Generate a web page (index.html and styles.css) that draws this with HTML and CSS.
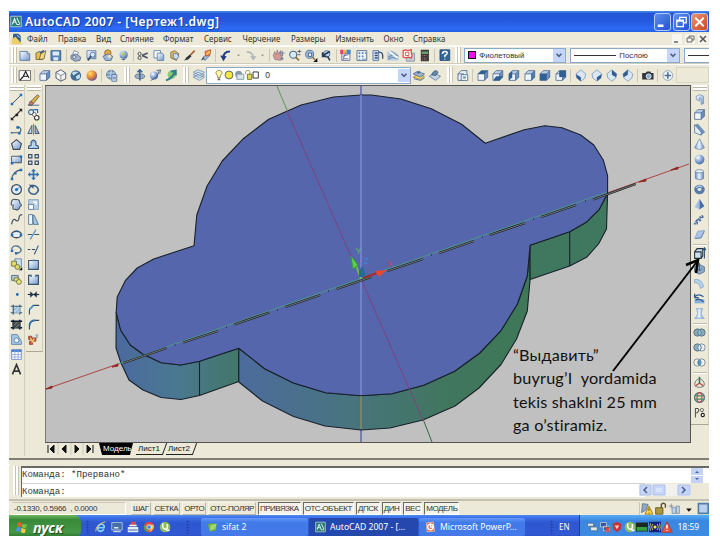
FILE: index.html
```
<!DOCTYPE html>
<html lang="ru">
<head>
<meta charset="utf-8">
<title>AutoCAD 2007 - [Чертеж1.dwg]</title>
<link rel="stylesheet" href="styles.css">
</head>
<body>
<svg class="defs" width="0" height="0">
<defs>
<linearGradient id="gb" x1="0" y1="0" x2="1" y2="1"><stop offset="0" stop-color="#fff"/><stop offset="1" stop-color="#7098cf"/></linearGradient>
<linearGradient id="gh"><stop stop-color="#6990ca"/><stop offset=".45" stop-color="#eef5ff"/><stop offset="1" stop-color="#6289c2"/></linearGradient>
<radialGradient id="gr" cx=".35" cy=".3" r=".8"><stop offset="0" stop-color="#fff"/><stop offset=".4" stop-color="#9bb8e4"/><stop offset="1" stop-color="#3d5f9c"/></radialGradient>
<radialGradient id="go" cx=".35" cy=".3" r=".8"><stop offset="0" stop-color="#ffdf69"/><stop offset=".5" stop-color="#e78b35"/><stop offset="1" stop-color="#5447aa"/></radialGradient>
<linearGradient id="wallA"><stop stop-color="#4b699f"/><stop offset=".5" stop-color="#4a7890"/><stop offset="1" stop-color="#427768"/></linearGradient>
<linearGradient id="wallB"><stop stop-color="#4c6b9c"/><stop offset=".38" stop-color="#48747f"/><stop offset=".7" stop-color="#41765f"/><stop offset="1" stop-color="#3e7856"/></linearGradient>
<symbol id="new" viewBox="0 0 16 16"><path d="M2 3h9l3 3v8H2z" fill="url(#gb)" stroke="#526f94"/><path d="M11 3v3h3" fill="#fff" stroke="#526f94"/></symbol>
<symbol id="open" viewBox="0 0 16 16"><path d="M2 5l4-2 4 2v8H2z" fill="#e6bb47" stroke="#685e42"/><path d="M6 13l2-7 6-4-2 10z" fill="#f7d979" stroke="#685e42"/><path d="M7 5l5-3" stroke="#35557c" stroke-width="2"/></symbol>
<symbol id="save" viewBox="0 0 16 16"><path d="M2 2h12v12H2z" fill="#5483be" stroke="#395779"/><path d="M4 3h8v5H4zM5 10h6v4H5z" fill="#dce9f6"/></symbol>
<symbol id="print" viewBox="0 0 16 16"><path d="M4 7l2-5 5 2-1 4" fill="#fff" stroke="#657da1"/><path d="M2 8l6-2 6 4-1 4-6 1-5-3z" fill="#a3b3ce" stroke="#526684"/><circle cx="6" cy="10" r="2" fill="#dce5f3" stroke="#526684"/></symbol>
<symbol id="preview" viewBox="0 0 16 16"><path d="M2 2h11v10H2z" fill="url(#gb)" stroke="#647fa6"/><circle cx="9" cy="7" r="3" fill="#d9edff" stroke="#4e6e97"/><path d="M7 9l-4 5" stroke="#354a66" stroke-width="2"/></symbol>
<symbol id="publish" viewBox="0 0 16 16"><circle cx="8" cy="5" r="4" fill="#e1a947" stroke="#826435"/><path d="M2 9l6-3 6 3-2 5H5z" fill="#9cb6dc" stroke="#546a8d"/><circle cx="10" cy="9" r="2" fill="#f6e6ab"/></symbol>
<symbol id="dwf" viewBox="0 0 16 16"><circle cx="9" cy="7" r="5" fill="url(#gr)"/><path d="M1 10q7 5 13 0l-5 4z" fill="#415f7f"/><path d="M6 4l5 1-3 5z" fill="#b4c75b"/></symbol>
<symbol id="cut" viewBox="0 0 16 16"><path d="M7 8l7-3M7 8l7 3" stroke="#475363" stroke-width="2"/><circle cx="4" cy="6" r="2" fill="none" stroke="#2e3a46"/><circle cx="4" cy="11" r="2" fill="none" stroke="#2e3a46"/></symbol>
<symbol id="copy" viewBox="0 0 16 16"><path d="M2 2h8v9H2z" fill="#fff" stroke="#577ba6"/><path d="M6 5h6l2 2v7H6z" fill="url(#gb)" stroke="#577ba6"/></symbol>
<symbol id="paste" viewBox="0 0 16 16"><path d="M3 4l5-2 5 4-3 8-7-3z" fill="#e3bd68" stroke="#7a6540"/><path d="M6 6l4-1 3 4-3 4-4-2z" fill="#c7dbf2" stroke="#5c7391"/></symbol>
<symbol id="brush" viewBox="0 0 16 16"><path d="M14 2L7 9" stroke="#a86237" stroke-width="2"/><path d="M8 7l2 2-4 4-5 1 3-4z" fill="#303541"/></symbol>
<symbol id="block" viewBox="0 0 16 16"><path d="M2 14l3-5 3 3z" fill="#335787"/><path d="M5 10l4-4 4 2-6 6z" fill="#a9bfd8" stroke="#55708f"/><path d="M7 3l7-2-1 6-5 2z" fill="#eb9449" stroke="#b9462f"/><path d="M9 7l4-4" stroke="#ffd964" stroke-width="1.500"/></symbol>
<symbol id="undo" viewBox="0 0 16 16"><path d="M13 3Q5 3 5 11" fill="none" stroke="#213d7e" stroke-width="2.5"/><path d="M1 8l8 1-4 6z" fill="#213d7e"/></symbol>
<symbol id="redo" viewBox="0 0 16 16"><path d="M3 4Q10 3 11 10" fill="none" stroke="#b3b6ba" stroke-width="2"/><path d="M7 9h8l-4 5z" fill="#b3b6ba"/></symbol>
<symbol id="caret" viewBox="0 0 8 16"><path d="M2 7h4L4 9z" fill="#8b8a83"/></symbol>
<symbol id="hand" viewBox="0 0 16 16"><path d="M3 13L1 8l2-5 2 4 1-6 2 5 2-4v6l3-1-3 7z" fill="#d29a93" stroke="#765b68" stroke-width=".6"/><path d="M12 2v6M9 5h6M12 10v4M10 12h4" stroke="#4b6ca0"/></symbol>
<symbol id="zoom" viewBox="0 0 16 16"><circle cx="6" cy="7" r="4.300" fill="#d6ebfa" stroke="#506c88" stroke-width="1.3"/><path d="M9 10l4 4" stroke="#8f7743" stroke-width="2.300"/><path d="M11 3h5M13.500 1v4M11 7h4" stroke="#3e536d"/></symbol>
<symbol id="zoomw" viewBox="0 0 16 16"><circle cx="6.500" cy="6.500" r="5" fill="#9bbddd" stroke="#466b94"/><path d="M5 5h4v4H5z" fill="#fff" stroke="#324e72"/><path d="M10 10l3 3" stroke="#8f7743" stroke-width="2"/><path d="M16 11v5h-5z" fill="#111"/></symbol>
<symbol id="zoomp" viewBox="0 0 16 16"><circle cx="9" cy="6" r="4" fill="#c6daed" stroke="#415e80"/><path d="M13 3L4 8M4 4v5h5M10 9l3 5" fill="none" stroke="#253954" stroke-width="2"/></symbol>
<symbol id="props" viewBox="0 0 16 16"><path d="M3 6h10v8H3z" fill="#f8faff" stroke="#596d8a"/><path d="M1 1h4v5H1z" fill="#e53e83"/><path d="M5 1h4v5H5z" fill="#e4c13b"/><path d="M9 1h5v5H9z" fill="#4b84c9"/><path d="M4 9l7-2M5 12h6M4 14l4-10" stroke="#675c91"/></symbol>
<symbol id="center" viewBox="0 0 16 16"><path d="M2 2h12v12H2z" fill="#eef6ff" stroke="#445f85"/><path d="M4 4h2v2H4zM8 4h2v2H8zM12 4h1v2h-1zM4 8h2v2H4zM8 8h2v2H8zM4 12h2v1H4zM8 12h5v1H8z" fill="#4a7db9"/></symbol>
<symbol id="palette" viewBox="0 0 16 16"><path d="M2 2h7v12H2z" fill="#dceafb" stroke="#456493"/><path d="M4 5h4M4 8h4M4 11h4M9 4q6-1 5 8" fill="none" stroke="#32527e" stroke-width="1.7"/></symbol>
<symbol id="sheet" viewBox="0 0 16 16"><path d="M1 3h9l5 5v6H1z" fill="#b4cce4"/><path d="M2 10l6-3 6 1M2 13l5-3 7 2" fill="none" stroke="#7292ae" stroke-width="1.500"/><path d="M4 3l10 8" stroke="#f4f9fc" stroke-width="2.500"/><path d="M5 2l10 7" stroke="#55738f" stroke-width=".8"/></symbol>
<symbol id="markup" viewBox="0 0 16 16"><path d="M5 5h10v10H5z" fill="#c4cad5" stroke="#8291a7"/><path d="M1 2l3-1 3 1 4-1v4l1 3-1 3-4-1-3 1-3-1V7z" fill="#fff" stroke="#e34645" stroke-width="1.500"/><path d="M4 4h4v4H4z" fill="none" stroke="#dd3d3d"/></symbol>
<symbol id="calc" viewBox="0 0 16 16"><path d="M3 1h10v14H3z" fill="#353c3b"/><path d="M4 3h8v3H4z" fill="#6e9c6d"/><path d="M5 8h6M5 11h6M5 13h6" stroke="#e66c6b" stroke-dasharray="1 1"/></symbol>
<symbol id="help" viewBox="0 0 16 16"><path d="M2 1h12v13H2z" fill="#346799" stroke="#254974"/><path d="M5 6q0-3 3-3 3 0 3 2 0 2-3 3v2M8 12v1" fill="none" stroke="#fff" stroke-width="1.7"/></symbol>
<symbol id="cube" viewBox="0 0 16 16"><path d="M2 6h8v8H2z" fill="#edf5ff"/><path d="M2 6l4-4h8l-4 4z" fill="#b7cdeb"/><path d="M10 6l4-4v8l-4 4z" fill="#688fc5"/><path d="M2 6h8v8H2zl4-4h8l-4 4M14 2v8l-4 4" fill="none" stroke="#455f88" stroke-width=".9"/></symbol>
<symbol id="hex" viewBox="0 0 16 16"><path d="M8 1l6 4v7l-6 3-6-4V4z" fill="#f4f5f6" stroke="#373f4b"/><path d="M2 4l6 4 6-3M8 8v7" fill="none" stroke="#65758d"/></symbol>
<symbol id="sphere" viewBox="0 0 16 16"><circle cx="8" cy="8" r="6" fill="url(#gr)"/></symbol>
<symbol id="world" viewBox="0 0 16 16"><circle cx="8" cy="8" r="6.500" fill="#456a91"/><path d="M3 5q4-3 8-1L5 8zM8 9l5-3v5l-4 2z" fill="#c5e0ef"/></symbol>
<symbol id="orange" viewBox="0 0 16 16"><circle cx="8" cy="8" r="6.500" fill="url(#go)"/></symbol>
<symbol id="visman" viewBox="0 0 16 16"><circle cx="7" cy="7" r="5.5" fill="#7799bd" stroke="#4b6e91"/><path d="M2 5h10M2 9h10M7 1v12" stroke="#d8e6f1"/><path d="M8 7h6v8H8z" fill="#d7e7fb" stroke="#496995"/><path d="M9 10h4M9 12h4" stroke="#496995"/></symbol>
<symbol id="textbox" viewBox="0 0 16 16"><path d="M1 2h14v12H1z" fill="#fff" stroke="#555"/><path d="M5 11l4-8 4 8M6 9h6M2 14l3-4" fill="none" stroke="#151515" stroke-width="1.3"/></symbol>
<symbol id="orbit1" viewBox="0 0 16 16"><ellipse cx="8" cy="9" rx="6" ry="3" fill="#98adc3" stroke="#5c728a"/><path d="M8 1v13M5 4l3-3 3 3" fill="none" stroke="#426895" stroke-width="2"/></symbol>
<symbol id="orbit2" viewBox="0 0 16 16"><circle cx="7" cy="8" r="5" fill="url(#gr)"/><path d="M3 14Q12 11 13 2M10 2l5-1-1 5" fill="none" stroke="#3d5572"/></symbol>
<symbol id="orbit3" viewBox="0 0 16 16"><circle cx="9" cy="7" r="5" fill="#8aca73"/><path d="M2 14Q10 12 13 3M8 3l6-1v6" fill="none" stroke="#2f7e8b" stroke-width="2.500"/></symbol>
<symbol id="layers" viewBox="0 0 16 16"><path d="M1 10l6-3 8 3-6 4zM1 7l6-3 8 3-6 4zM1 4l6-3 8 3-6 4z" fill="#d8e5f1" stroke="#7093b2"/></symbol>
<symbol id="layerc" viewBox="0 0 16 16"><path d="M1 10l5-3 9 2-5 4z" fill="#f5da5b" stroke="#958439"/><path d="M1 6l5-3 9 3-5 4z" fill="#9cb3ca" stroke="#526e8e"/><path d="M5 4l5-2-2 4" fill="#426890"/><path d="M2 12l8 2 5-3" fill="none" stroke="#466789"/></symbol>
<symbol id="layerp" viewBox="0 0 16 16"><path d="M1 9l6-4 8 4-6 5z" fill="#c1d2e6" stroke="#627b98"/><path d="M4 7q4-8 8-3l-3 4z" fill="#678cb7" stroke="#354f70"/></symbol>
<symbol id="named" viewBox="0 0 16 16"><path d="M2 6l4-4h7v4M2 6h7v8H2z" fill="#e9f2fc" stroke="#466183"/><path d="M6 7h8v7H6z" fill="#fff" stroke="#466183"/><path d="M8 9h4v3H8z" fill="#84a2c5"/></symbol>
<symbol id="iso" viewBox="0 0 16 16"><path d="M8 1l6 5-1 5-5 4-5-4-1-5z" fill="#d9e7f6" stroke="#6784a6" stroke-width=".8"/><path d="M2 6l6 4v5l-5-4z" fill="#2f5d91"/></symbol>
<symbol id="iso2" viewBox="0 0 16 16"><path d="M8 1l6 5-1 5-5 4-5-4-1-5z" fill="#d9e7f6" stroke="#6784a6" stroke-width=".8"/><path d="M8 1l6 5-1 4-5-3z" fill="#2f5d91"/></symbol>
<symbol id="camera" viewBox="0 0 16 16"><path d="M1 5h4l2-2h4l1 2h3v8H1z" fill="#303541"/><circle cx="9" cy="9" r="3" fill="#86afcb" stroke="#fff"/></symbol>
<symbol id="target" viewBox="0 0 16 16"><circle cx="8" cy="8" r="6" fill="#edf3fa" stroke="#8297ae"/><path d="M8 4v8M4 8h8" stroke="#527195" stroke-width="2"/></symbol>
<symbol id="line" viewBox="0 0 16 16"><path d="M3 13L13 3" stroke="#344a68" stroke-width="1.2"/><path d="M1 12h3v3H1zM12 1h3v3h-3z" fill="#2272c3"/></symbol>
<symbol id="xline" viewBox="0 0 16 16"><path d="M2 14L14 2" stroke="#222" stroke-width="1.5"/><path d="M1 11l4 4H1zM11 1h4v4zM7 7h3v3H7z" fill="#222"/></symbol>
<symbol id="pline" viewBox="0 0 16 16"><path d="M2 12h9q5-4 0-7H8" fill="none" stroke="#506477" stroke-width="1.5"/><path d="M1 11h2v2H1zM8 4h3v3H8zM10 11h3v3h-3z" fill="#166dbd"/></symbol>
<symbol id="poly" viewBox="0 0 16 16"><path d="M8 2l6 5-2 7H4L2 7z" fill="url(#gb)" stroke="#3f4952" stroke-width="1.4"/></symbol>
<symbol id="rect" viewBox="0 0 16 16"><path d="M2 4h12v8H2z" fill="url(#gb)" stroke="#2f3f51"/><path d="M1 11h3v3H1zM12 3h3v3h-3z" fill="#2169b5"/></symbol>
<symbol id="arc" viewBox="0 0 16 16"><path d="M2 14Q3 4 14 2" fill="none" stroke="#42586d" stroke-width="1.5"/><path d="M1 12h3v3H1zM5 5h3v3H5zM12 1h3v3h-3z" fill="#286bae"/></symbol>
<symbol id="circle" viewBox="0 0 16 16"><circle cx="8" cy="8" r="6" fill="#e5edf3" stroke="#344c62" stroke-width="1.5"/><path d="M7 9l5-4" stroke="#2974c1"/><circle cx="8" cy="8" r="2" fill="#2974c1"/></symbol>
<symbol id="cloud" viewBox="0 0 16 16"><path d="M4 9Q0 9 2 5q0-4 5-3 5-1 5 4 4 3 0 5-1 5-5 3-5 1-3-5z" fill="url(#gb)" stroke="#52606a" stroke-width="1.5"/></symbol>
<symbol id="spline" viewBox="0 0 16 16"><path d="M2 14Q3 7 6 8q4 4 5-1 0-5 4-5" fill="none" stroke="#4d5868" stroke-width="1.5"/></symbol>
<symbol id="ellipse" viewBox="0 0 16 16"><ellipse cx="8" cy="8" rx="6" ry="4" fill="#e4eefb" stroke="#3d4b59" stroke-width="1.6"/><path d="M1 7h3v3H1zM12 7h3v3h-3zM7 3h2v2H7z" fill="#206dbb"/></symbol>
<symbol id="earc" viewBox="0 0 16 16"><path d="M2 8q1-6 8-4 7 5 1 8l-4 1" fill="none" stroke="#52708d" stroke-width="1.7"/><path d="M1 8h3v3H1zM6 11h3v3H6z" fill="#2f6fac"/></symbol>
<symbol id="insert" viewBox="0 0 16 16"><path d="M6 1h8v10H6z" fill="#c9e1f4" stroke="#607d99"/><path d="M2 4h6v6H2z" fill="#e0dc65" stroke="#666a3e"/><circle cx="9" cy="11" r="3" fill="#e0dc65" stroke="#666a3e"/><path d="M11 15h4v-4z" fill="#111"/></symbol>
<symbol id="make" viewBox="0 0 16 16"><path d="M2 3h8v6H2z" fill="#bacddd" stroke="#435b76"/><path d="M5 6h6v4H5z" fill="#e8e66f" stroke="#606b3f"/><circle cx="11" cy="11" r="3" fill="#e8e66f" stroke="#606b3f"/></symbol>
<symbol id="point" viewBox="0 0 16 16"><circle cx="9" cy="8" r="1.7" fill="#276cab"/></symbol>
<symbol id="hatch" viewBox="0 0 16 16"><path d="M4 2v12M12 2v12M1 4h14M1 12h14" stroke="#385979" stroke-width="1.5"/><path d="M5 5h7v7H5z" fill="#b8d4eb"/><path d="M5 9l4-4M7 12l5-5" stroke="#6e97bb"/></symbol>
<symbol id="grad" viewBox="0 0 16 16"><path d="M4 2v12M12 2v12M1 4h14M1 12h14" stroke="#111d30" stroke-width="2"/><path d="M4 5h8v7H4z" fill="#404957"/><path d="M5 9l4-4M7 12l5-5" stroke="#a49d5e"/></symbol>
<symbol id="region" viewBox="0 0 16 16"><path d="M2 2h7l5 8v4H2z" fill="#a7c9e9" stroke="#587a9a"/><circle cx="8" cy="9" r="3" fill="#e6f2fc" stroke="#587a9a"/></symbol>
<symbol id="table" viewBox="0 0 16 16"><path d="M2 2h12v12H2z" fill="#fff" stroke="#6683bd"/><path d="M2 2h12v3H2z" fill="#4c7fd0"/><path d="M2 8h12M2 11h12M6 2v12M10 2v12" stroke="#8ca9da"/></symbol>
<symbol id="mtext" viewBox="0 0 16 16"><path d="M3 14L8 2l5 12M5 10h6" fill="none" stroke="#333" stroke-width="2"/></symbol>
<symbol id="erase" viewBox="0 0 16 16"><path d="M5 10l8-8 2 2-7 9z" fill="#dcae4b" stroke="#665b45"/><path d="M4 10l4 3-2 2H2z" fill="#ce7770" stroke="#67575b"/><path d="M1 15h14" stroke="#31577c"/></symbol>
<symbol id="copyo" viewBox="0 0 16 16"><circle cx="5" cy="5" r="3" fill="#deeefd" stroke="#385a82" stroke-width="1.3"/><circle cx="12" cy="12" r="2.800" fill="#fff" stroke="#333" stroke-width="1.3"/><circle cx="9" cy="8" r="2.300" fill="#fff" stroke="#444"/><path d="M8 2h5v4" fill="none" stroke="#336ba7" stroke-width="1.5"/></symbol>
<symbol id="mirror" viewBox="0 0 16 16"><path d="M6 3v10H1zM10 3v10h5z" fill="url(#gb)" stroke="#2f465e"/><path d="M8 1v14" stroke="#367dc9"/></symbol>
<symbol id="offset" viewBox="0 0 16 16"><path d="M2 13q-1-4 3-4V5q3-5 6 0v4q4 0 3 4z" fill="#8fb7dd" stroke="#38587c" stroke-width="1.3"/><path d="M4 12q0-1 3-1V7q1-2 2 0v4h3" fill="none" stroke="#eaf5ff"/></symbol>
<symbol id="array" viewBox="0 0 16 16"><path d="M2 2h4v4H2zM10 2h4v4h-4zM2 10h4v4H2zM10 10h4v4h-4z" fill="#eef4f9" stroke="#3a4f68" stroke-width="1.5"/></symbol>
<symbol id="move" viewBox="0 0 16 16"><path d="M8 1l3 3H9v3h3V5l3 3-3 3V9H9v3h2l-3 3-3-3h2V9H4v2L1 8l3-3v2h3V4H5z" fill="#336da9"/></symbol>
<symbol id="rotate" viewBox="0 0 16 16"><path d="M5 4q-6 5 0 9 6 3 9-4-1-6-7-6" fill="none" stroke="#3e658f" stroke-width="2"/><path d="M2 2h6v5z" fill="#34597f"/></symbol>
<symbol id="scale" viewBox="0 0 16 16"><path d="M2 2h12v12H2z" fill="#b7cfe7" stroke="#7b9bbd"/><path d="M2 8h6v6H2z" fill="#fff" stroke="#54789f"/><path d="M8 5h3v3" fill="none" stroke="#fff" stroke-width="2"/></symbol>
<symbol id="stretch" viewBox="0 0 16 16"><path d="M2 2h5v12H2z" fill="#edf7ff" stroke="#456987"/><path d="M7 3h2l5 11H8z" fill="#a6c8e5" stroke="#456987"/></symbol>
<symbol id="trim" viewBox="0 0 16 16"><path d="M1 8h6M9 8h6" stroke="#425469" stroke-width="1.5"/><path d="M4 14l7-12" stroke="#5695ca" stroke-width="1.5"/></symbol>
<symbol id="extend" viewBox="0 0 16 16"><path d="M1 8h3M6 8h4" stroke="#334961" stroke-width="1.5"/><path d="M9 14l5-11" stroke="#4a7097" stroke-width="1.5"/></symbol>
<symbol id="break" viewBox="0 0 16 16"><path d="M2 3h12v11H2z" fill="url(#gb)" stroke="#3b536b" stroke-width="1.3"/><path d="M7 2h3v2H7z" fill="#477aa7"/></symbol>
<symbol id="break2" viewBox="0 0 16 16"><path d="M5 3H2v11h12V3h-3" fill="url(#gb)" stroke="#3b536b" stroke-width="1.5"/><path d="M4 2h2v3H4zM10 2h2v3h-2z" fill="#477aa7"/></symbol>
<symbol id="join" viewBox="0 0 16 16"><path d="M1 8h14" stroke="#1c304a" stroke-width="1.5"/><path d="M4 4l4 4-4 4zM12 4L8 8l4 4z" fill="#1c304a"/></symbol>
<symbol id="chamfer" viewBox="0 0 16 16"><path d="M3 14V8l5-5h7" fill="none" stroke="#394c61" stroke-width="1.4"/><path d="M3 8l5-5" stroke="#3f9ad6" stroke-width="2"/></symbol>
<symbol id="fillet" viewBox="0 0 16 16"><path d="M3 14V9Q4 3 10 3h5" fill="none" stroke="#394c61" stroke-width="1.500"/><path d="M3 9Q4 3 10 3" fill="none" stroke="#3272ad" stroke-width="2.300"/></symbol>
<symbol id="explode" viewBox="0 0 16 16"><path d="M2 4h4v4H2zM7 6h4v4H7zM3 10h4v4H3z" fill="#d3593b" stroke="#934433"/><path d="M4 6l3 5M9 7l-3 5" stroke="#f4ce64" stroke-width="1.500"/><path d="M10 6l4-4M10 2l4 4M12 1v6" stroke="#889db0"/></symbol>
<symbol id="solid" viewBox="0 0 16 16"><path d="M4 4l4-2 5 2v9l-3 1V7L8 6v4l-4-2z" fill="url(#gb)" stroke="#7697bd"/></symbol>
<symbol id="wedge" viewBox="0 0 16 16"><path d="M2 2l4-1 9 10-5 4z" fill="#6e92bd"/><path d="M2 2l8 9v4l-8-3z" fill="#e2ecf8" stroke="#5b7898"/></symbol>
<symbol id="cone" viewBox="0 0 16 16"><path d="M8 1l6 11q-6 4-12 0z" fill="url(#gh)" stroke="#718cab"/></symbol>
<symbol id="cyl" viewBox="0 0 16 16"><path d="M3 4v9q5 3 10 0V4" fill="url(#gh)" stroke="#6783a3"/><ellipse cx="8" cy="4" rx="5" ry="2" fill="#eaf4ff" stroke="#6783a3"/></symbol>
<symbol id="torus" viewBox="0 0 16 16"><ellipse cx="8" cy="8" rx="4.500" ry="3.800" fill="none" stroke="#587bac" stroke-width="4"/><path d="M4 6q3-4 7-1" fill="none" stroke="#abc8ea" stroke-width="2"/></symbol>
<symbol id="pyr" viewBox="0 0 16 16"><path d="M8 1l-6 10 6 3z" fill="#a6c0e5"/><path d="M8 1l6 9-6 4z" fill="#466fa9"/></symbol>
<symbol id="helix" viewBox="0 0 16 16"><path d="M1 13h4V9h4V5h5M3 11l9-8" fill="none" stroke="#4c72a6" stroke-width="2.200" stroke-dasharray="2.500 1"/></symbol>
<symbol id="plane" viewBox="0 0 16 16"><path d="M6 4l8-1-4 9-8 1z" fill="#acc5ed" stroke="#82a2cb"/><path d="M3 13l7-1 4-8" fill="none" stroke="#5f7ea8"/></symbol>
<symbol id="extrude" viewBox="0 0 16 16"><path d="M2 6h8v8H2zM2 6l3-4h7v9l-2 3" fill="#c8e0f1" stroke="#27333d" stroke-width="1.3"/><path d="M14 14V2M12 4l2-3 2 3" fill="none" stroke="#244a73" stroke-width="1.300"/></symbol>
<symbol id="presspull" viewBox="0 0 16 16"><path d="M2 6l6-3 6 3v6l-6 3-6-3z" fill="#8baac7" stroke="#526b86"/><path d="M8 1v10M5 8l3 3 3-3" fill="none" stroke="#335c88"/></symbol>
<symbol id="sweep" viewBox="0 0 16 16"><path d="M2 3q9-1 11 9l-4 2q0-7-7-7z" fill="#b7d2f2" stroke="#85a3c7"/></symbol>
<symbol id="revolve" viewBox="0 0 16 16"><path d="M2 9h12v5H2z" fill="#8ab2d8"/><path d="M2 6q5-5 11 0M2 2v5h5M3 10q5-3 10 2" fill="none" stroke="#2f5e98" stroke-width="1.6"/></symbol>
<symbol id="loft" viewBox="0 0 16 16"><path d="M4 2h8l-1 2q-2 4 1 8l2 2H2l2-2q3-4 1-8z" fill="url(#gh)" stroke="#8daed0"/></symbol>
<symbol id="union" viewBox="0 0 16 16"><g fill="#8ba7b5" stroke="#4e697b"><circle cx="5.5" cy="8" r="4.5"/><circle cx="10.5" cy="8" r="4.5"/></g><path d="M8 4q-4 4 0 8 4-4 0-8" fill="#87cbe2" stroke="#557b8e"/></symbol>
<symbol id="subtract" viewBox="0 0 16 16"><circle cx="10.500" cy="8" r="4.500" fill="#e9edee" stroke="#69808f"/><circle cx="5.5" cy="8" r="4.5" fill="#8fb0c4" stroke="#4e697b"/><path d="M8 4q-4 4 0 8 4-4 0-8" fill="#e3f0f5" stroke="#557b8e"/></symbol>
<symbol id="intersect" viewBox="0 0 16 16"><circle cx="5.5" cy="8" r="4.5" fill="#edf0ee" stroke="#69808f"/><circle cx="10.5" cy="8" r="4.5" fill="#edf0ee" stroke="#69808f"/><path d="M8 4q-4 4 0 8 4-4 0-8" fill="#4e9dca" stroke="#557b8e"/></symbol>
<symbol id="axes" viewBox="0 0 16 16"><path d="M8 3q-6 2-6 8M8 3q6 2 6 8M2 12q6 4 12 0" fill="none" stroke="#59616b"/><path d="M8 9l-5 3M8 9l5 3" fill="none" stroke="#af423b" stroke-width="1.5"/><path d="M8 1v8" stroke="#3e7952" stroke-width="2"/></symbol>
<symbol id="globe" viewBox="0 0 16 16"><circle cx="8" cy="8" r="6" fill="#f5dfcb" stroke="#48779a" stroke-width="1.500"/><ellipse cx="8" cy="8" rx="3" ry="6" fill="none" stroke="#c34a43" stroke-width="1.4"/><path d="M2 6h12M2 10h12" stroke="#3f8d67" stroke-width="1.5"/></symbol>
<symbol id="align" viewBox="0 0 16 16"><path d="M3 14V3h3q3 3-2 6" fill="none" stroke="#555" stroke-width="1.3"/><circle cx="11" cy="5" r="2" fill="none" stroke="#555"/><circle cx="12" cy="11" r="2" fill="#fff" stroke="#222" stroke-width="1.400"/></symbol>
<symbol id="acad" viewBox="0 0 16 16"><path d="M1 1h14v14H1z" fill="#257b7b" stroke="#d0e0d8"/><path d="M3 12l3-8 3 8M4 9h4M9 3l4 8M9 12h4" fill="none" stroke="#e1f0e6" stroke-width="1.4"/></symbol>
<symbol id="flag" viewBox="0 0 16 16"><path d="M2 3q3-2 5 0L6 8Q3 6 1 8z" fill="#f05b2c"/><path d="M8 4q3 2 6 0l-2 5q-3 1-5-1z" fill="#7bbf43"/><path d="M1 9q2-2 5 0l-1 5q-3-2-5 0z" fill="#4b96ea"/><path d="M7 9q2 2 5 1l-1 5q-3 1-5-1z" fill="#f6cd3c"/></symbol>
<symbol id="chrome" viewBox="0 0 16 16"><circle cx="8" cy="8" r="7" fill="#e8483e"/><path d="M2 5l6 10A7 7 0 0 1 2 5" fill="#4aa84e"/><path d="M8 5h6q2 6-6 10l3-5z" fill="#f7cf44"/><circle cx="8" cy="8" r="3" fill="#4685df" stroke="#fff"/></symbol>
<symbol id="utor" viewBox="0 0 16 16"><circle cx="8" cy="8" r="7" fill="#8fbd62"/><path d="M5 3q-1 8 4 8 3 0 2-7M10 10q0 4 4 2" fill="none" stroke="#fff" stroke-width="2"/></symbol>
<symbol id="ie" viewBox="0 0 16 16"><path d="M12 11q-3 4-7 2-3-3 0-7 3-3 6-1 2 2 1 4H4" fill="none" stroke="#85d2ff" stroke-width="2.3"/><path d="M1 14Q1 4 14 1" fill="none" stroke="#efce59" stroke-width="1.2"/></symbol>
<symbol id="desk" viewBox="0 0 16 16"><path d="M1 2h14v10H1z" fill="#466fa9" stroke="#b9d1ed"/><path d="M4 9h6" stroke="#dde9ef" stroke-width="2"/><path d="M3 14h10" stroke="#c5d3dd" stroke-width="2"/></symbol>
<symbol id="floppy" viewBox="0 0 16 16"><path d="M5 1h7v6H5z" fill="#d74c4c"/><path d="M1 8h14v7H1z" fill="#dfeefa"/><path d="M2 12h12" stroke="#5970ae" stroke-width="1.500"/><path d="M3 6h10" stroke="#f3f3f3" stroke-width="2"/></symbol>
<symbol id="folder" viewBox="0 0 16 16"><path d="M1 4l6-2 7 2-1 9-9 2z" fill="#65ad45"/><path d="M5 5l9-2-2 8-8 2z" fill="#a2d763"/></symbol>
<symbol id="ppt" viewBox="0 0 16 16"><path d="M2 2l10-1 2 13-11 1z" fill="#dd5938" stroke="#ffd6bd"/><circle cx="8" cy="8" r="4" fill="none" stroke="#fff" stroke-width="2"/><path d="M8 3v5h4" fill="none" stroke="#fff" stroke-width="2"/></symbol>
<symbol id="lock" viewBox="0 0 16 16"><path d="M2 7h9v8H2z" fill="#a99739" stroke="#5b5329"/><path d="M9 7V3q3-3 5 0v4" fill="none" stroke="#5b5329" stroke-width="1.7"/></symbol>
<symbol id="warn" viewBox="0 0 16 16"><path d="M8 1l7 14H1z" fill="#ea553e" stroke="#ad3424"/><path d="M8 5v5M8 12v1" stroke="#fff" stroke-width="2"/></symbol>
<symbol id="notify" viewBox="0 0 16 16"><path d="M3 2l7 1-3 7-5 3z" fill="#92aac5" stroke="#556f8e"/><path d="M11 5l5 10H6z" fill="#ffd437" stroke="#8b701b"/><path d="M11 8v3M11 13v1" stroke="#333"/></symbol>
<symbol id="tray" viewBox="0 0 16 16"><path d="M1 5h6M4 2v6" stroke="#758da3"/><path d="M5 7h5v7H5zM10 5h4v9h-4z" fill="#c1d4e7" stroke="#7691ae"/></symbol>
<symbol id="network" viewBox="0 0 16 16"><path d="M2 2h8v6H2zM6 7h8v6H6z" fill="#385998" stroke="#c5d0df"/><path d="M8 8l7 7M15 8l-7 7" stroke="#e24c3e" stroke-width="2"/></symbol>
<symbol id="usb" viewBox="0 0 16 16"><path d="M2 3h8v4H2zM6 8h9v5H6z" fill="#e2e7e8" stroke="#4b6983"/></symbol>
<symbol id="shield" viewBox="0 0 16 16"><path d="M8 1l6 3-1 7-5 4-5-4-1-7z" fill="#c9343b"/><path d="M5 6h6l-3 5z" fill="#f2d6c1"/></symbol>
<symbol id="bars" viewBox="0 0 16 16"><path d="M0 2h16v12H0z" fill="#192b21"/><path d="M1 8h14v5H1z" fill="#36a144"/></symbol>
<symbol id="wifi" viewBox="0 0 16 16"><path d="M0 1h16v14H0z" fill="#17217c"/><circle cx="8" cy="8" r="2" fill="#ffe957"/><path d="M5 4q-3 4 0 8M11 4q3 4 0 8M2 3q-2 5 0 10M14 3q2 5 0 10" fill="none" stroke="#ffe957"/></symbol>
<symbol id="down" viewBox="0 0 16 16"><path d="M4 6l4 4 4-4" fill="none" stroke="#4d6185" stroke-width="2.6"/></symbol>
</defs>
</svg>

<main class="screen">
  <header class="title"><svg class="logo"><use href="#acad"/></svg><h1>AutoCAD 2007 - [Чертеж1.dwg]</h1>
    <div class="winbtns"><svg viewBox="0 0 16 16"><path d="M3 12h6" stroke="#fff" stroke-width="2.5"/></svg><svg viewBox="0 0 16 16"><path d="M6 6V3h7v6h-3M3 6h7v7H3zM3 7h7" fill="none" stroke="#fff" stroke-width="1.3"/></svg><svg class="close" viewBox="0 0 16 16"><path d="M3.500 3.500l9 9M12.500 3.500l-9 9" stroke="#fff" stroke-width="2"/></svg></div>
  </header>
  <nav class="menu"><svg viewBox="0 0 16 16"><path d="M3 1h7l3 3v9H2z" fill="#315f92"/><path d="M1 15V8l5-3 9 10z" fill="#edcd65"/><path d="M8 3l4 3" stroke="#eee"/></svg><span>Файл</span><span>Правка</span><span>Вид</span><span>Слияние</span><span>Формат</span><span>Сервис</span><span>Черчение</span><span>Размеры</span><span>Изменить</span><span>Окно</span><span>Справка</span>
    <div class="mdi"><svg viewBox="0 0 10 10"><path d="M2 8h4" stroke="#666" stroke-width="1.5"/></svg><svg viewBox="0 0 10 10"><path d="M4 4V2h5v4H7M2 4h5v4H2z" fill="none" stroke="#666"/></svg><svg viewBox="0 0 10 10"><path d="M2 2l6 6M8 2L2 8" stroke="#555" stroke-width="1.5"/></svg></div>
  </nav>
  <div class="bar">
    <i class="grip"></i>
    <svg><use href="#new"/></svg><svg><use href="#open"/></svg><svg><use href="#save"/></svg><i class="sep"></i>
    <svg><use href="#print"/></svg><svg><use href="#preview"/></svg><svg><use href="#publish"/></svg><svg><use href="#dwf"/></svg><i class="sep"></i>
    <svg><use href="#cut"/></svg><svg><use href="#copy"/></svg><svg><use href="#paste"/></svg><svg><use href="#brush"/></svg><svg><use href="#block"/></svg><i class="sep"></i>
    <svg><use href="#undo"/></svg><svg class="car"><use href="#caret"/></svg><svg><use href="#redo"/></svg><svg class="car"><use href="#caret"/></svg><i class="sep"></i>
    <svg><use href="#hand"/></svg><svg><use href="#zoom"/></svg><svg><use href="#zoomw"/></svg><svg><use href="#zoomp"/></svg><i class="sep"></i>
    <svg><use href="#props"/></svg><svg><use href="#center"/></svg><svg><use href="#palette"/></svg><svg><use href="#sheet"/></svg><svg><use href="#markup"/></svg><svg><use href="#calc"/></svg><i class="sep"></i>
    <svg><use href="#help"/></svg><i class="grip dbl"></i>
    <div class="combo color"><i class="swatch"></i><span>Фиолетовый</span><b><svg><use href="#down"/></svg></b></div>
    <div class="combo ltype"><i class="rule"></i><span>Послою</span><b><svg><use href="#down"/></svg></b></div>
    <div class="combo last"><i class="rule"></i></div>
  </div>
  <div class="bar second">
    <i class="grip"></i><svg><use href="#textbox"/></svg><i class="sep"></i>
    <svg><use href="#cube"/></svg><svg><use href="#hex"/></svg><svg><use href="#world"/></svg><svg><use href="#orange"/></svg><i class="sep"></i>
    <svg><use href="#visman"/></svg><i class="grip dbl wide"></i>
    <svg><use href="#orbit1"/></svg><svg><use href="#orbit2"/></svg><svg><use href="#orbit3"/></svg><i class="grip dbl wide"></i>
    <svg><use href="#layers"/></svg>
    <div class="combo layer"><svg class="states" viewBox="0 0 52 16"><path d="M5 11V9Q1 5 5 3q5-1 5 3l-2 3v2z" fill="#fff8a5" stroke="#88824f"/><path d="M5 13h3" stroke="#666" stroke-width="2"/><circle cx="18" cy="8" r="4.500" fill="#f5e83b" stroke="#4f5b50"/><circle cx="29" cy="7" r="4" fill="#8998a4"/><path d="M27 7h8v6h-8z" fill="#d8e6ef" stroke="#8298a8"/><path d="M39 7h5v6h-5z" fill="#dfdb4c" stroke="#6f702d"/><path d="M37 7V4q3-3 5 0v3" fill="none" stroke="#8f903b"/><path d="M45.500 4.500h6v7h-6z" fill="#fff" stroke="#222"/></svg><span>0</span><b><svg><use href="#down"/></svg></b></div>
    <svg><use href="#layerc"/></svg><svg><use href="#layerp"/></svg><i class="grip dbl wide"></i>
    <svg><use href="#named"/></svg><i class="sep"></i>
    <svg viewBox="0 0 16 16"><use href="#cube"/><path d="M2 6l4-4h8l-4 4z" fill="#315f91"/></svg><svg viewBox="0 0 16 16"><use href="#cube"/><path d="M2 14l4-5h8l-4 5z" fill="#315f91"/></svg><svg viewBox="0 0 16 16"><use href="#cube"/><path d="M2 6l4-4v8l-4 4z" fill="#315f91"/></svg><svg viewBox="0 0 16 16"><use href="#cube"/><path d="M10 6l4-4v8l-4 4z" fill="#4c78aa"/></svg><svg viewBox="0 0 16 16"><use href="#cube"/><path d="M2 6h8v8H2z" fill="#315f91"/></svg><svg viewBox="0 0 16 16"><use href="#cube"/><path d="M6 2h8v8H6z" fill="#315f91"/></svg><i class="sep"></i>
    <svg><use href="#iso"/></svg><svg class="flip"><use href="#iso"/></svg><svg><use href="#iso2"/></svg><svg class="flip"><use href="#iso2"/></svg><i class="sep"></i><svg><use href="#camera"/></svg><i class="sep"></i><svg><use href="#target"/></svg><i class="rest"></i>
  </div>

  <section class="work">
    <aside class="tools draw"><i class="top"></i>
      <svg><use href="#line"/></svg><svg><use href="#xline"/></svg><svg><use href="#pline"/></svg><svg><use href="#poly"/></svg><svg><use href="#rect"/></svg><svg><use href="#arc"/></svg><svg><use href="#circle"/></svg><svg><use href="#cloud"/></svg><svg><use href="#spline"/></svg><svg><use href="#ellipse"/></svg><svg><use href="#earc"/></svg><svg><use href="#insert"/></svg><svg><use href="#make"/></svg><svg><use href="#point"/></svg><svg><use href="#hatch"/></svg><svg><use href="#grad"/></svg><svg><use href="#region"/></svg><svg><use href="#table"/></svg><svg><use href="#mtext"/></svg>
    </aside>
    <aside class="tools modify"><div class="panel"><i class="top"></i>
      <svg><use href="#erase"/></svg><svg><use href="#copyo"/></svg><svg><use href="#mirror"/></svg><svg><use href="#offset"/></svg><svg><use href="#array"/></svg><svg><use href="#move"/></svg><svg><use href="#rotate"/></svg><svg><use href="#scale"/></svg><svg><use href="#stretch"/></svg><svg><use href="#trim"/></svg><svg><use href="#extend"/></svg><svg><use href="#break"/></svg><svg><use href="#break2"/></svg><svg><use href="#join"/></svg><svg><use href="#chamfer"/></svg><svg><use href="#fillet"/></svg><svg><use href="#explode"/></svg></div>
    </aside>
    <div class="view">
      <div class="canvas">
        <svg class="model" viewBox="46 86 643 356">
          <path d="M276.500 85L287 110" stroke="#579b4f"/>
          <path d="M361 85V95M361 429V442" stroke="#6265b4" stroke-width="1.500"/>
          <path d="M46 389L118 364M607 193L689 164" stroke="#aa4542"/>
          <path d="M46 389l6-3v2zM112 367l6-3v2zM639 182l7-3v2zM671 170l7-3v2z" fill="#962724" stroke="#962724"/>
          <g stroke="#17212a" stroke-width="1.100" stroke-linejoin="round">
            <path fill="url(#wallA)" d="M116.200 312.300L116 348L121 363L129 380L143 390L161 397.500L181 399.500L199.500 395.500L238.800 381.500V348.300L199.500 361.300L180.900 365L161.300 362.700L142.700 354L130.300 345L120.700 330.300z"/>
            <path fill="url(#wallB)" d="M238.800 348.300V382L262.500 401L293.500 416.500L325 426L361 430L390 428L423 420L455 406L479 388L501 364.500L516.500 339L527.300 311L530.100 279V245.300L527.300 276L517.400 304L501.200 330.300L479.800 353L454.700 371.300L423.700 385.300L392 393.700L361 395.700L325.600 392.700L293.500 383L264.600 368.700z"/>
            <path fill="#40775f" d="M530.100 245.300V279.500L569.700 266L587 257L598.500 244L606.500 229L607.600 193.300L599.300 209.300L586.200 222.300L569.700 231.700z"/>
            <path d="M199.500 361v34.500M569.700 231.700V266" fill="none"/>
            <path fill="#5566ad" d="M361 95L371.400 95L401 99L431.300 108.700L461.600 124.300L485.300 143.300L524.200 129.700L544.900 125.700L562.100 127.700L580.700 135L593.800 145L603.400 160.300L607.600 175.700V193.300L599.300 209.300L586.200 222.300L569.700 231.700L530.100 245.300L527.300 276L517.400 304L501.200 330.300L479.800 353L454.700 371.300L423.700 385.300L392 393.700L361 395.700L325.600 392.700L293.500 383L264.600 368.700L238.800 348.300L199.500 361.300L180.900 365L161.300 362.700L142.700 354L130.300 345L120.700 330.300L116.200 312.300L117.200 297L125.500 280.300L137.200 268L153.700 259L194 245.700L196.800 215L207.100 186L222.200 161L243.300 138.700L268.700 119.300L301.100 105L333.500 97z"/>
          </g>
          <path d="M361 95V395" stroke="#7c8bd3" stroke-width="1.500"/><path d="M361 396V429" stroke="#938e63" stroke-width="1.300"/>
          <path d="M287 111L361 279L423 420" fill="none" stroke="#7c427f"/><path d="M423 419l9 23" stroke="#36673d"/>
          <path d="M118 364L607 192" stroke="#4e9589"/>
          <g fill="none" stroke="#172021" stroke-width="2.300"><path d="M123.400 363L166.500 348M183 342.500L218 331M234.300 324.500L269.300 312.500M285.300 307L320.300 295M336.500 289L371.300 277M387.500 271L423 259M439 253L474 241M489.500 235L525 223M541 217L576 205M593 199.500L635.800 184"/></g>
          <path d="M123.400 363L166.500 348M183 342.500L218 331M234.300 324.500L269.300 312.500M285.300 307L320.300 295M336.500 289L371.300 277M387.500 271L423 259M439 253L474 241M489.500 235L525 223M541 217L576 205M593 199.500L635.800 184" fill="none" stroke="#8b8f8a" stroke-width=".8"/>
          <path d="M174.500 345h1M226 327h1M277 310h1M328 291h1M379 273h1M431 255h1M482 237h1M533 219h1M585 201h1" stroke="#25324c" stroke-width="1.500"/>
          <path d="M361 279L355 263" stroke="#70bd55" stroke-width="2"/><path d="M351 256l7 9-5 4z" fill="#5ed245" stroke="#38983e"/>
          <path d="M363 278L377 273" stroke="#a52b2d" stroke-width="2"/><path d="M387 270l-12 1 4 6z" fill="#e64a32"/><path d="M359 277v-6l3-5 3 5v6z" fill="#2d6897"/>
          <text x="355.500" y="254" class="axis" fill="#5fbb64">Y</text><text x="363.500" y="264" class="axis" fill="#4280da">Z</text><text x="387" y="267" class="axis" fill="#bd4662">X</text>
        </svg>
        <p class="note">“Выдавить”<br>buyrug’I&nbsp; yordamida<br>tekis shaklni 25 mm<br>ga o’stiramiz.</p>
        <svg class="pointer" viewBox="610 254 92 120"><path d="M613 371L697.500 261" stroke="#000" stroke-width="2"/><path d="M686 265L698 260L696 273" fill="none" stroke="#000" stroke-width="2.500"/></svg>
      </div>
      <div class="tabs"><svg viewBox="0 0 52 12"><path d="M3 2v8M9 2v8L5 6zM21 2v8l-4-4zM30 2v8l4-4zM42 2v8l4-4zM48 2v8" fill="#111" stroke="#111"/><path d="M13 0v12M26 0v12M38 0v12" stroke="#bab8a9" stroke-width=".6"/></svg><b>Модель</b><span>Лист1</span><span>Лист2</span></div>
    </div>
    <aside class="tools right"><div class="panel"><i class="top"></i>
      <svg><use href="#solid"/></svg><svg><use href="#cube"/></svg><svg><use href="#wedge"/></svg><svg><use href="#cone"/></svg><svg><use href="#sphere"/></svg><svg><use href="#cyl"/></svg><svg><use href="#torus"/></svg><svg><use href="#pyr"/></svg><svg><use href="#helix"/></svg><svg><use href="#plane"/></svg><i class="hsep"></i>
      <svg><use href="#extrude"/></svg><svg><use href="#presspull"/></svg><svg><use href="#sweep"/></svg><svg><use href="#revolve"/></svg><svg><use href="#loft"/></svg><i class="hsep"></i>
      <svg><use href="#union"/></svg><svg><use href="#subtract"/></svg><svg><use href="#intersect"/></svg><i class="hsep"></i><svg><use href="#axes"/></svg><svg><use href="#globe"/></svg><svg><use href="#align"/></svg></div>
    </aside>
  </section>

  <section class="command"><i class="grip"></i><div class="log"><div class="history">Команда: *Прервано*</div><div class="prompt">Команда:</div></div>
    <div class="scrolls"><svg class="vs" viewBox="0 0 12 15"><path d="M0 0h12v7H0zM0 8h12v7H0z" fill="#c3d2f5"/><path d="M4 5l2-2 2 2zM4 10l2 2 2-2z" fill="#4a628f"/></svg><svg class="hs" viewBox="0 0 52 12"><path d="M0 0h52v12H0z" fill="#f2f1ed"/><path d="M1 1h11v10H1zM14 1h12v10H14zM39 1h12v10H39z" fill="#c6d5f8" stroke="#aebfe9"/><path d="M8 3L5 6l3 3M43 3l3 3-3 3" fill="none" stroke="#48618b" stroke-width="1.500"/><path d="M18 4v4M20 4v4M22 4v4" stroke="#e8f2ff"/></svg></div>
  </section>
  <section class="status"><span class="coord">-0.1330, 0.5966&nbsp; , 0.0000</span><span>ШАГ</span><span>СЕТКА</span><span>ОРТО</span><span>ОТС-ПОЛЯР</span><span class="on">ПРИВЯЗКА</span><span class="on">ОТС-ОБЪЕКТ</span><span class="on">ДПСК</span><span class="on">ДИН</span><span class="on">ВЕС</span><span class="on">МОДЕЛЬ</span><div class="sicons"><svg><use href="#notify"/></svg><svg><use href="#lock"/></svg><svg><use href="#tray"/></svg><svg viewBox="0 0 16 16"><path d="M5 8h7l-3.500 4z" fill="#111"/></svg><svg viewBox="0 0 16 16"><path d="M3 2h12v12H3z" fill="#b9d1eb" stroke="#507dac" stroke-width="2"/></svg></div></section>
  <footer class="taskbar"><div class="start"><svg><use href="#flag"/></svg><span>пуск</span></div><i class="dots"></i><div class="quick"><svg><use href="#ie"/></svg><svg><use href="#desk"/></svg><svg><use href="#floppy"/></svg><svg><use href="#chrome"/></svg><svg><use href="#utor"/></svg></div><i class="dots"></i><div class="task t1"><svg><use href="#folder"/></svg>sifat 2</div><div class="task active"><svg><use href="#acad"/></svg>AutoCAD 2007 - [...</div><div class="task t3"><svg><use href="#ppt"/></svg>Microsoft PowerP...</div><i class="dots d3"></i><span class="lang">EN</span><div class="tray"><svg><use href="#usb"/></svg><svg><use href="#network"/></svg><svg><use href="#shield"/></svg><svg><use href="#utor"/></svg><svg><use href="#bars"/></svg><svg><use href="#wifi"/></svg><svg><use href="#warn"/></svg><time>18:59</time></div></footer>
</main>
</body>
</html>
```
FILE: styles.css
```
* { box-sizing: border-box; }
body { margin: 0; background: #fff; overflow: hidden; font-family: "Noto Sans", sans-serif; color: #333; }
svg { display: block; flex: none; }
.defs { position: absolute; }
.screen { width: 700px; height: 525px; margin: 11px 0 0 9px; background: #ece9d8; overflow: hidden; display: flex; flex-direction: column; }
.screen > * { flex: none; }
.title { height: 21px; display: flex; align-items: center; background: linear-gradient(#4c91ef 0, #2455d3 12%, #2459df 45%, #2d6bf4 84%, #2462e4 100%); }
.logo { width: 12px; height: 13px; margin-left: 1px; }
.title h1 { margin: 0 0 0 3px; font: 600 12px/20px "Noto Sans", sans-serif; letter-spacing: .47px; color: #fff; white-space: nowrap; text-shadow: 1px 1px #163f9c; }
.winbtns { display: flex; gap: 1.500px; margin-left: auto; padding-right: 1px; }
.winbtns svg { width: 17px; height: 18px; border: 1px solid #b4c9fa; border-radius: 3px; background: linear-gradient(135deg, #5f8df0, #2352cf); }
.winbtns .close { background: linear-gradient(135deg, #e99575, #cc4721); }
.menu { height: 14px; display: grid; grid-template-columns: 18px 31px 38px 24px 43px 41px 38.500px 48.500px 44.500px 48px 29.500px 50px 1fr; align-items: center; font-size: 8px; line-height: 13px; white-space: nowrap; border-bottom: 1px solid #f9f7ee; }
.menu > svg { width: 12px; height: 12px; margin-left: 2px; }
.mdi { display: flex; gap: 3px; justify-content: flex-end; padding-right: 1px; }
.mdi svg { width: 10px; height: 10px; background: #f6f5ee; }
.bar { height: 18px; display: flex; align-items: center; border-top: 1px solid #fff; border-bottom: 1px solid #cfccba; overflow: hidden; }
.bar.second { height: 21px; border-bottom: 0; }
.bar > svg { width: 15.700px; height: 13px; }
.bar > .car { width: 9px; }
.flip { transform: scaleX(-1); }
.grip { flex: none; width: 5px; height: 16px; margin: 0 1.500px; border-left: 2px solid #fff; border-right: 2px solid #fff; background: #c5c2b1; box-shadow: 1px 0 #c5c2b1; }
.grip.dbl { margin: 0 4px 0 3px; }
.grip.wide { margin: 0 3px 0 4px; }
.sep { flex: none; width: 1px; height: 13px; margin: 0 1.600px; background: #cac7b6; }
.combo { flex: none; display: flex; align-items: center; height: 15px; background: #fff; border: 1px solid #8baacb; font-size: 7.500px; overflow: hidden; white-space: nowrap; }
.combo b { width: 12px; height: 13px; background: #c6d6fb; margin-left: auto; display: grid; place-items: center; }
.combo b svg { width: 10px; height: 10px; }
.color { width: 102px; font-family: "Liberation Sans", sans-serif; font-size: 7.800px; }
.swatch { width: 8px; height: 8px; margin: 0 3px; border: 1px solid #111; background: #ed13e8; }
.ltype { width: 110px; margin-left: 4px; font-family: "Liberation Sans", sans-serif; font-size: 7.800px; }
.rule { flex: none; width: 42px; height: 1px; background: #333; margin: 0 3px; }
.last { width: 30px; margin-left: 4px; }
.layer { width: 205px; height: 17px; font-family: "Liberation Sans", sans-serif; font-size: 8.500px; }
.states { width: 52px; height: 14px; margin: 0 3px; }
.rest { flex: 1; margin-left: 1px; height: 16px; border: 1px solid #d8d5c5; }
.work { height: 371px; display: flex; }
.tools { width: 18px; display: flex; flex-direction: column; align-items: center; }
.tools svg { width: 13px; height: 13px; margin: 1.010px 0; }
.top { flex: none; width: 14px; height: 5px; margin: 0 0 2px; border-top: 2px solid #fff; border-bottom: 2px solid #fff; background: #bab7a8; box-shadow: 0 1px #bab7a8; }
.draw { width: 16px; border-right: 1px solid #d1cebe; }
.modify { width: 20px; padding-right: 2px; background: #ece9d8; }
.panel { width: 17px; display: flex; flex-direction: column; align-items: center; border-right: 1px solid #cfccbb; border-bottom: 1px solid #aaa799; padding-bottom: 4px; }
.view { width: 646px; }
.canvas { position: relative; height: 358px; background: #c0c0c0; border: 1px solid #535353; border-left: 1px solid #777; }
.model { width: 643px; height: 356px; }
.axis { font: 9px "Liberation Sans", sans-serif; }
.note { position: absolute; left: 467px; top: 257px; margin: 0; font: 16.200px/23.300px Lato, "Noto Sans", sans-serif; letter-spacing: .2px; font-variant-ligatures: none; color: #111; white-space: nowrap; }
.pointer { position: absolute; left: 564px; top: 168px; width: 92px; height: 120px; }
.tabs { display: flex; align-items: center; height: 12px; font: 8px/12px "Liberation Sans", sans-serif; color: #111; }
.tabs svg { width: 52px; height: 12px; }
.tabs b { background: #000; color: #fff; padding: 0 0 0 4px; margin: 0 3px 0 2px; width: 34px; height: 12px; clip-path: polygon(0 0, 100% 0, 91% 100%, 9% 100%); font-weight: 400; }
.tabs span { position: relative; padding: 0 0 0 2px; height: 12px; border-bottom: 1px solid #222; margin-right: 3px; width: 27px; }
.tabs span::after { content: ""; position: absolute; right: -2px; top: 0; width: 1px; height: 12px; background: #222; transform: skewX(-20deg); }
.right .panel { width: 18px; }
.hsep { flex: none; width: 14px; height: 1px; margin: 1.600px 0; background: #bebbab; box-shadow: 0 1px #fff; }
.command { height: 41px; border-top: 2px solid #817f75; padding: 6px 0 0 4px; display: flex; margin-top: 2px; }
.command .grip { height: 29px; margin: 0 3px 0 0; }
.log { flex: 1; height: 31px; border: 1px solid #696963; border-width: 2px 0 0 1px; background: #fff; font: 9.080px/13px "Liberation Mono", monospace; }
.history { height: 16px; border-bottom: 1px solid #d2d1cc; }
.prompt { padding-top: 1px; }
.scrolls { width: 64px; border-top: 2px solid #696963; display: flex; flex-direction: column; align-items: flex-end; background: linear-gradient(#fff 15px, #ece9d8 0); }
.vs { width: 12px; height: 15px; margin-right: 6px; }
.hs { width: 52px; height: 12px; margin: 1px 18px 0 0; }
.status { height: 16px; display: flex; align-items: center; gap: 2px; border-top: 2px solid #c4c1b2; font: 8px/12px "Liberation Sans", sans-serif; letter-spacing: -.47px; padding-left: 3px; white-space: nowrap; }
.status span { height: 13px; padding: 0 1px; border: 1px solid #d3d0c1; border-color: #f8f6ec #bbb8aa #bbb8aa #f8f6ec; }
.status .coord { width: 114px; margin-right: 3px; border-color: #c9c6b8 #fff #fff transparent; letter-spacing: -.25px; }
.status .on { background: #f4f2e9; border-color: #6c6a62 #fff #fff #6c6a62; }
.sicons { margin-left: auto; display: flex; gap: 1px; border-left: 1px solid #c9c6b8; }
.sicons svg { width: 13px; height: 13px; }
.taskbar { flex: 1 0 auto !important; display: flex; align-items: center; background: linear-gradient(#4f8af0 0, #3b6fe7 12%, #2d56cf 35%, #3159d4 85%, #2444a9 100%); color: #fff; font-size: 8.600px; overflow: hidden; white-space: nowrap; }
.start { width: 72px; height: 23px; display: flex; align-items: center; border-radius: 0 7px 7px 0; background: linear-gradient(#70b765, #398a38 20%, #449745 75%, #286f2b); font: italic 700 14.500px/22px "Noto Sans", sans-serif; text-shadow: 1px 1px 1px #174617; }
.start svg { width: 13px; height: 14px; margin: 0 4px 0 7px; }
.dots { flex: none; width: 4px; height: 14px; margin: 0 5px; opacity: .6; background: radial-gradient(circle, #1d3690 .8px, transparent 1.200px) 0 0 / 3px 3px; }
.quick { width: 86px; display: flex; gap: 4px; }
.quick svg { width: 12px; height: 12px; }
.task { flex: none; height: 18px; display: flex; align-items: center; padding-left: 6px; background: linear-gradient(#6398fa, #417ae9 25%, #4479e8); border-radius: 2px; }
.task svg { width: 11px; height: 12px; margin-right: 4px; }
.t1 { width: 107px; margin-left: 6px; }
.active { width: 109px; background: #2448ae; margin: 0 1px; }
.t3 { width: 106px; }
.d3 { margin-left: 25px; }
.lang { width: 20px; font-size: 8px; }
.tray { flex: 1; height: 23px; display: flex; align-items: center; gap: .5px; padding-left: 6px; background: linear-gradient(#58aef7, #3b86e0 25%, #3e8ce4); border-left: 1px solid #1b3f9b; }
.tray svg { width: 12px; height: 12px; }
.tray time { margin-left: 4px; font-size: 8.500px; }
```
